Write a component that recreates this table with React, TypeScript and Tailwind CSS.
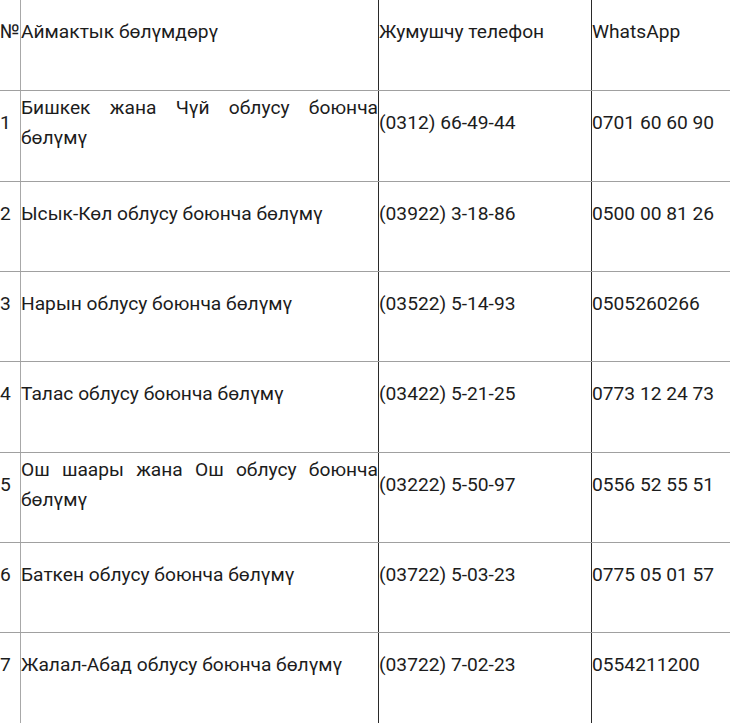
const rows = [
  { n: "1", name: "Бишкек жана Чүй облусу боюнча бөлүмү", phone: "(0312) 66-49-44", wa: "0701 60 60 90", h: "h-[91px]" },
  { n: "2", name: "Ысык-Көл облусу боюнча бөлүмү", phone: "(03922) 3-18-86", wa: "0500 00 81 26", h: "h-[90px]" },
  { n: "3", name: "Нарын облусу боюнча бөлүмү", phone: "(03522) 5-14-93", wa: "0505260266", h: "h-[90px]" },
  { n: "4", name: "Талас облусу боюнча бөлүмү", phone: "(03422) 5-21-25", wa: "0773 12 24 73", h: "h-[91px]" },
  { n: "5", name: "Ош шаары жана Ош облусу боюнча бөлүмү", phone: "(03222) 5-50-97", wa: "0556 52 55 51", h: "h-[90px]" },
  { n: "6", name: "Баткен облусу боюнча бөлүмү", phone: "(03722) 5-03-23", wa: "0775 05 01 57", h: "h-[90px]" },
  { n: "7", name: "Жалал-Абад облусу боюнча бөлүмү", phone: "(03722) 7-02-23", wa: "0554211200", h: "h-[91px]" },
]

function Row({ n, name, phone, wa, h }: { n: string; name: string; phone: string; wa: string; h: string }) {
  return (
    <div className={`grid grid-cols-[20px_358px_213px_1fr] border-b border-[#a0a0a0] ${h}`}>
      <div className="flex items-center pb-[26px] whitespace-nowrap">{n}</div>
      <div className="flex items-center pb-[26px] border-l border-[#a8a8a8]">
        <p className="w-full text-justify">{name}</p>
      </div>
      <div className="flex items-center pb-[26px] border-l border-[#2a2a2a]">{phone}</div>
      <div className="flex items-center pb-[26px] border-l border-[#2a2a2a]">{wa}</div>
    </div>
  )
}

export default function App() {
  return (
    <div className="w-[730px] h-[723px] overflow-hidden bg-white text-[#1c1c1c] text-[19.2px] leading-[30px] font-['Roboto',sans-serif]">
      <Row n="№" name="Аймактык бөлүмдөрү" phone="Жумушчу телефон" wa="WhatsApp" h="h-[91px]" />
      {rows.map((r) => (
        <Row key={r.n} {...r} />
      ))}
    </div>
  )
}
